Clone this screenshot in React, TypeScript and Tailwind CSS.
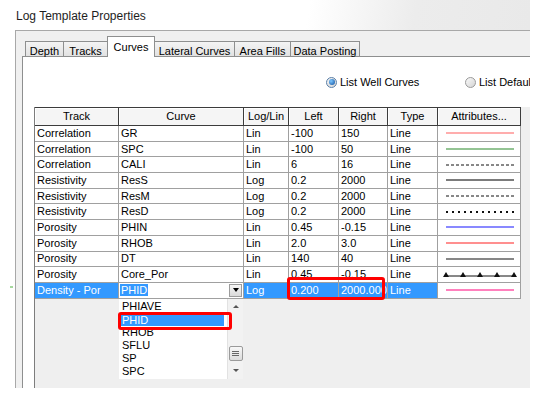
import React from "react";

type Row = [string, string, string, string, string, string, string];

const rows: Row[] = [
  ["Correlation", "GR", "Lin", "-100", "150", "Line", "red"],
  ["Correlation", "SPC", "Lin", "-100", "50", "Line", "green"],
  ["Correlation", "CALI", "Lin", "6", "16", "Line", "dash"],
  ["Resistivity", "ResS", "Log", "0.2", "2000", "Line", "gray"],
  ["Resistivity", "ResM", "Log", "0.2", "2000", "Line", "dash"],
  ["Resistivity", "ResD", "Log", "0.2", "2000", "Line", "dots"],
  ["Porosity", "PHIN", "Lin", "0.45", "-0.15", "Line", "blue"],
  ["Porosity", "RHOB", "Lin", "2.0", "3.0", "Line", "pink"],
  ["Porosity", "DT", "Lin", "140", "40", "Line", "black"],
  ["Porosity", "Core_Por", "Lin", "0.45", "-0.15", "Line", "markers"],
];

const headers = ["Track", "Curve", "Log/Lin", "Left", "Right", "Type", "Attributes..."];
const colW = ["w-[84px]", "w-[125px]", "w-[45px]", "w-[50px]", "w-[49px]", "w-[50px]", "w-[83px]"];

const tabs = [
  { label: "Depth", w: "w-[39px]" },
  { label: "Tracks", w: "w-[45px]" },
  { label: "Curves", w: "w-[48px]", active: true },
  { label: "Lateral Curves", w: "w-[81px]" },
  { label: "Area Fills", w: "w-[57px]" },
  { label: "Data Posting", w: "w-[70px]" },
];

const listItems = ["PHIAVE", "PHID", "RHOB", "SFLU", "SP", "SPC"];

function AttrLine({ kind }: { kind: string }) {
  const l = { x1: 8, x2: 76, y1: 7, y2: 7 };
  return (
    <svg width="83" height="14" className="block shrink-0">
      {kind === "red" && <line {...l} stroke="#ff5c5c" strokeWidth="1.2" />}
      {kind === "green" && <line {...l} stroke="#2a8a2a" strokeWidth="1.2" />}
      {kind === "dash" && <line {...l} stroke="#111" strokeWidth="1" strokeDasharray="3 2" />}
      {kind === "gray" && <line {...l} stroke="#7c7c7c" strokeWidth="2" />}
      {kind === "dots" && <line {...l} stroke="#111" strokeWidth="2" strokeDasharray="2 4" />}
      {kind === "blue" && <line {...l} stroke="#6262ff" strokeWidth="1.5" />}
      {kind === "pink" && <line {...l} stroke="#ff6a6a" strokeWidth="1.5" />}
      {kind === "black" && <line {...l} stroke="#111" strokeWidth="1.2" />}
      {kind === "rose" && <line {...l} stroke="#ff80bd" strokeWidth="2" />}
      {kind === "markers" && (
        <g>
          <line x1="8" x2="76" y1="8" y2="8" stroke="#111" strokeWidth="1" />
          {[8, 25, 42, 59, 76].map((x) => (
            <polygon key={x} points={`${x - 3},9 ${x + 3},9 ${x},4`} fill="#111" />
          ))}
        </g>
      )}
    </svg>
  );
}

export default function App() {
  return (
    <div className="relative w-[546px] h-[414px] overflow-hidden bg-white font-['Liberation_Sans',Arial,sans-serif] text-black">
      <div className="w-[530px] h-[30px] pl-[16px] pt-[9px] text-[12px] leading-[14px] text-[#1e1e1e] bg-[linear-gradient(100deg,#ffffff_58%,#ececec_78%,#e9e9e9)]">
        Log Template Properties
      </div>

      <div className="ml-[15px] w-[515px] h-[358px] overflow-hidden border-l border-t border-[#a8a8a8] bg-[#f0f0f0]">
        <div className="flex items-end h-[25px] pl-[9px]">
          {tabs.map((t) =>
            t.active ? (
              <div
                key={t.label}
                className={`${t.w} shrink-0 -ml-px h-[21px] -mb-px relative z-10 flex justify-center pt-[5px] border-t border-l border-r border-[#8e8f8f] bg-white text-[11px] leading-none`}
              >
                {t.label}
              </div>
            ) : (
              <div
                key={t.label}
                className={`${t.w} shrink-0 -ml-px first:ml-0 h-[15px] flex justify-center pt-[4px] border-t border-l border-r border-[#8e8f8f] bg-gradient-to-b from-[#f4f4f4] to-[#e2e2e2] text-[11px] leading-none`}
              >
                {t.label}
              </div>
            ),
          )}
        </div>

        <div className="ml-[6px] w-[700px] h-[400px] border-l border-t border-[#8e8f8f] bg-white">
          <div className="mt-[19px] h-[12px] flex items-center pl-[303px]">
            <div className="flex items-center w-[139px] shrink-0">
              <span className="w-[11px] h-[11px] rounded-full border border-[#5a7fa8] bg-gradient-to-br from-[#f4f4f4] to-[#d6d6d6] flex items-center justify-center">
                <span className="w-[6px] h-[6px] rounded-full bg-[radial-gradient(circle_at_35%_35%,#7cc6ff,#0d4f9f)]" />
              </span>
              <span className="ml-[3px] text-[11px] leading-none">List Well Curves</span>
            </div>
            <div className="flex items-center shrink-0">
              <span className="w-[11px] h-[11px] rounded-full border border-[#9a9a9a] bg-gradient-to-br from-[#fafafa] to-[#d4d4d4]" />
              <span className="ml-[3px] text-[11px] leading-none">List Default Curves</span>
            </div>
          </div>

          <div className="relative mt-[19px] ml-[11px] w-[530px] h-[300px] border-l border-[#7d7d7d] bg-[#efefef]">
            <div className="flex h-[19px]">
              {headers.map((h, i) => (
                <div
                  key={h}
                  className={`${colW[i]} shrink-0 flex items-center justify-center border-t border-r border-b border-[#3c3c3c] bg-[#f5f5f5] shadow-[inset_1px_1px_0_#ffffff] text-[11px] leading-none`}
                >
                  {h}
                </div>
              ))}
            </div>

            {rows.map((r, ri) => (
              <div key={ri} className="flex h-[15.7px]">
                {r.map((v, i) => (
                  <div
                    key={i}
                    className={`${colW[i]} shrink-0 flex items-center overflow-hidden whitespace-nowrap border-r border-b border-[#a0a0a0] bg-white text-[11px] leading-none ${i === 6 ? "" : "pl-[2px]"}`}
                  >
                    {i === 6 ? <AttrLine kind={v} /> : v}
                  </div>
                ))}
              </div>
            ))}

            <div className="flex h-[15.7px] text-[11px] leading-none">
              <div className={`${colW[0]} shrink-0 flex items-center pl-[2px] border-r border-b border-[#a0a0a0] bg-[#3399ff] text-white whitespace-nowrap`}>
                Density - Por
              </div>
              <div className={`${colW[1]} shrink-0 flex items-center pl-[1px] pr-[1px] border-r border-b border-[#a0a0a0] bg-white`}>
                <span className="bg-[#3399ff] text-white h-[12px] flex items-center px-[1px]">PHID</span>
                <span className="ml-auto w-[13px] h-[13px] flex items-center justify-center border border-[#9c9c9c] bg-gradient-to-b from-[#f6f6f6] to-[#dadada]">
                  <span className="w-0 h-0 border-x-[3.5px] border-x-transparent border-t-[4px] border-t-black" />
                </span>
              </div>
              <div className={`${colW[2]} shrink-0 flex items-center pl-[2px] border-r border-b border-[#a0a0a0] bg-[#3399ff] text-white`}>
                Log
              </div>
              <div className={`${colW[3]} shrink-0 flex items-center pl-[2px] border-r border-b border-[#a0a0a0] bg-[#3399ff] text-white`}>
                0.200
              </div>
              <div className={`${colW[4]} shrink-0 flex items-center pl-[2px] border-r border-b border-[#a0a0a0] bg-[#3399ff] text-white whitespace-nowrap overflow-hidden`}>
                2000.000
              </div>
              <div className={`${colW[5]} shrink-0 flex items-center pl-[2px] border-r border-b border-[#a0a0a0] bg-[#3399ff] text-white`}>
                Line
              </div>
              <div className={`${colW[6]} shrink-0 flex items-center border-r border-b border-[#a0a0a0] bg-white`}>
                <AttrLine kind="rose" />
              </div>
            </div>

            <div className="absolute left-[84px] top-[192px] w-[124px] h-[80px] flex bg-white">
              <div className="flex-1 flex flex-col pt-[1px]">
                {listItems.map((it) =>
                  it === "PHID" ? (
                    <div key={it} className="h-[13px] flex items-center">
                      <span className="ml-[2px] w-[103px] h-[11px] mt-[1px] flex items-center pl-[1px] bg-[#3399ff] text-white text-[11px] leading-none">
                        {it}
                      </span>
                    </div>
                  ) : (
                    <div key={it} className="h-[13px] flex items-center pl-[3px] text-[11px] leading-none">
                      {it}
                    </div>
                  ),
                )}
              </div>
              <div className="w-[16px] flex flex-col items-center bg-[#f2f2f2] border-l border-[#e2e2e2] pt-[6px]">
                <span className="w-0 h-0 border-x-[3px] border-x-transparent border-b-[3px] border-b-[#555]" />
                <span className="mt-[38px] w-[14px] h-[15px] flex flex-col items-center justify-center gap-[1px] border border-[#9a9a9a] rounded-[2px] bg-gradient-to-b from-[#f8f8f8] to-[#dcdcdc]">
                  <span className="w-[7px] h-px bg-[#666]" />
                  <span className="w-[7px] h-px bg-[#666]" />
                  <span className="w-[7px] h-px bg-[#666]" />
                </span>
                <span className="mt-[8px] w-0 h-0 border-x-[3px] border-x-transparent border-t-[3px] border-t-[#555]" />
              </div>
            </div>

            <div className="absolute left-[83px] top-[205px] w-[114px] h-[18px] border-[3px] border-[#ff0000] rounded-[3px]" />
            <div className="absolute left-[252px] top-[170px] w-[98px] h-[23px] border-[3px] border-[#ff0000] rounded-[3px]" />
          </div>
        </div>
      </div>

      <div className="absolute left-[10px] top-[286px] w-[3px] h-[2px] bg-[#a6d89e]" />
    </div>
  );
}
